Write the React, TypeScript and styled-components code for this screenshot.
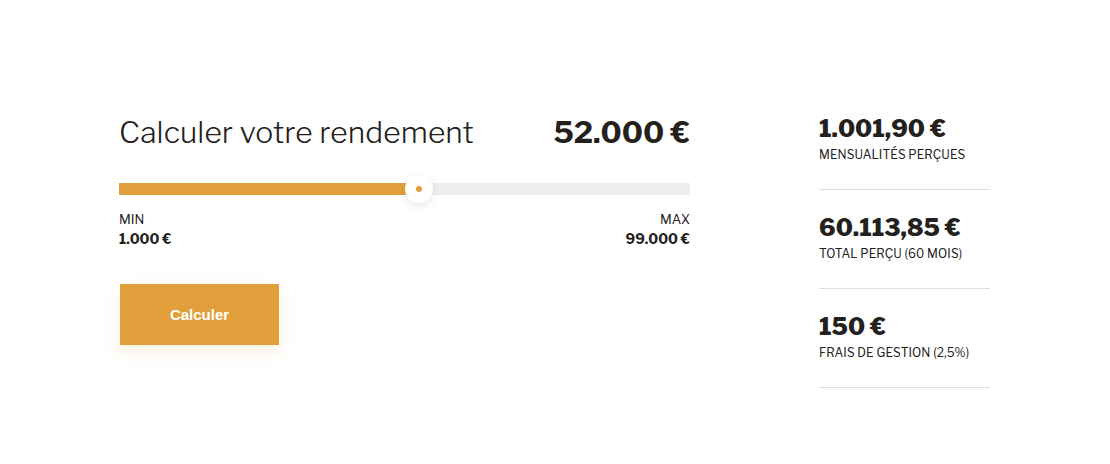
import React from "react";
import styled, { createGlobalStyle } from "styled-components";

const Global = createGlobalStyle`
  html, body { margin: 0; padding: 0; background: #ffffff; }
  body { font-family: "Libre Franklin", "Inter", "Open Sans", sans-serif; color: #24201b; }
`;

const Page = styled.div`
  display: flex;
  align-items: flex-start;
  padding: 112px 0 0 119px;
  gap: 129px;
`;

const Calculator = styled.section`
  width: 571px;
  display: flex;
  flex-direction: column;
`;

const Header = styled.div`
  display: flex;
  justify-content: space-between;
  align-items: baseline;
`;

const Title = styled.h1`
  margin: 0;
  font-size: 30px;
  font-weight: 300;
  line-height: 40px;
  letter-spacing: 0.1px;
`;

const Amount = styled.div`
  font-size: 30px;
  font-weight: 700;
  line-height: 40px;
`;

const Track = styled.div`
  position: relative;
  margin-top: 31px;
  height: 12px;
  background: #ededed;
`;

const Fill = styled.div`
  height: 100%;
  background: #e09f3a;
`;

const Knob = styled.div`
  position: absolute;
  top: 50%;
  width: 28px;
  height: 28px;
  margin: -14px 0 0 -11px;
  border-radius: 50%;
  background: #ffffff;
  box-shadow: 0 3px 10px rgba(0, 0, 0, 0.09);
  display: flex;
  align-items: center;
  justify-content: center;
  &::after {
    content: "";
    width: 6px;
    height: 6px;
    border-radius: 50%;
    background: #e09f3a;
  }
`;

const Bounds = styled.div`
  display: flex;
  justify-content: space-between;
  margin-top: 15px;
`;

const Bound = styled.div<{ $right?: boolean }>`
  display: flex;
  flex-direction: column;
  align-items: ${(p) => (p.$right ? "flex-end" : "flex-start")};
`;

const BoundLabel = styled.span`
  font-size: 13px;
  line-height: 18px;
  font-weight: 400;
`;

const BoundValue = styled.span`
  font-size: 14px;
  line-height: 20px;
  font-weight: 700;
  margin-top: 1px;
`;

const Button = styled.button`
  margin-top: 35px;
  margin-left: 1px;
  width: 159px;
  height: 61px;
  border: none;
  background: #e09f3a;
  color: #ffffff;
  font-family: "Liberation Sans", Arial, sans-serif;
  font-weight: 700;
  font-size: 15px;
  box-shadow: 0 6px 16px rgba(224, 159, 58, 0.18);
  cursor: pointer;
`;

const Results = styled.aside`
  width: 171px;
  display: flex;
  flex-direction: column;
  padding-top: 2px;
`;

const Result = styled.div`
  display: flex;
  flex-direction: column;
  padding-bottom: 26px;
  margin-bottom: 23px;
  border-bottom: 1px solid #dddddd;
`;

const ResultValue = styled.div`
  font-size: 24px;
  font-weight: 800;
  line-height: 30px;
`;

const ResultLabel = styled.div`
  font-size: 12px;
  line-height: 16px;
  font-weight: 400;
  margin-top: 3px;
  letter-spacing: 0.1px;
`;

const value = 52000;
const min = 1000;
const max = 99000;

export default function App() {
  const pct = ((value - min) / (max - min)) * 100;
  const results = [
    { v: "1.001,90 €", l: "MENSUALITÉS PERÇUES" },
    { v: "60.113,85 €", l: "TOTAL PERÇU (60 MOIS)" },
    { v: "150 €", l: "FRAIS DE GESTION (2,5%)" },
  ];
  return (
    <>
      <Global />
      <Page>
        <Calculator>
          <Header>
            <Title>Calculer votre rendement</Title>
            <Amount>52.000 €</Amount>
          </Header>
          <Track>
            <Fill style={{ width: `${pct}%` }} />
            <Knob style={{ left: `${pct}%` }} />
          </Track>
          <Bounds>
            <Bound>
              <BoundLabel>MIN</BoundLabel>
              <BoundValue>1.000 €</BoundValue>
            </Bound>
            <Bound $right>
              <BoundLabel>MAX</BoundLabel>
              <BoundValue>99.000 €</BoundValue>
            </Bound>
          </Bounds>
          <Button>Calculer</Button>
        </Calculator>
        <Results>
          {results.map((r) => (
            <Result key={r.l}>
              <ResultValue>{r.v}</ResultValue>
              <ResultLabel>{r.l}</ResultLabel>
            </Result>
          ))}
        </Results>
      </Page>
    </>
  );
}
